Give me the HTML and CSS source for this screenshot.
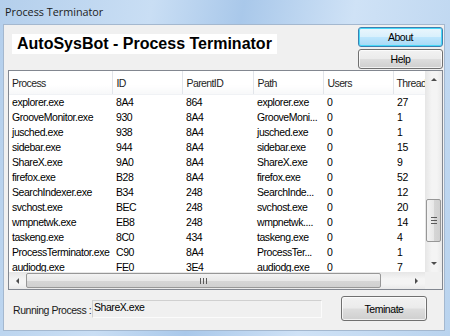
FILE: index.html
```html
<!DOCTYPE html>
<html lang="en">
<head>
    <meta charset="UTF-8">
    <title>Process Terminator</title>
    <link rel="stylesheet" href="styles.css">
</head>
<body>
    <div class="window">
        <div class="titlebar">Process Terminator</div>
        <div class="client">
            <div class="top">
                <div class="banner">AutoSysBot - Process Terminator</div>
                <div class="side-buttons">
                    <button class="btn btn-default">About</button>
                    <button class="btn">Help</button>
                </div>
            </div>

            <div class="listview">
                <div class="list-area">
                    <table class="procs">
                        <colgroup>
                            <col style="width:103px"><col style="width:70px"><col style="width:71px">
                            <col style="width:70px"><col style="width:70px"><col style="width:70px">
                        </colgroup>
                        <thead>
                            <tr><th>Process</th><th>ID</th><th>ParentID</th><th>Path</th><th>Users</th><th>Threads</th></tr>
                        </thead>
                        <tbody>
                            <tr><td>explorer.exe</td><td>8A4</td><td>864</td><td>explorer.exe</td><td>0</td><td>27</td></tr>
                            <tr><td>GrooveMonitor.exe</td><td>930</td><td>8A4</td><td>GrooveMoni...</td><td>0</td><td>1</td></tr>
                            <tr><td>jusched.exe</td><td>938</td><td>8A4</td><td>jusched.exe</td><td>0</td><td>1</td></tr>
                            <tr><td>sidebar.exe</td><td>944</td><td>8A4</td><td>sidebar.exe</td><td>0</td><td>15</td></tr>
                            <tr><td>ShareX.exe</td><td>9A0</td><td>8A4</td><td>ShareX.exe</td><td>0</td><td>9</td></tr>
                            <tr><td>firefox.exe</td><td>B28</td><td>8A4</td><td>firefox.exe</td><td>0</td><td>52</td></tr>
                            <tr><td>SearchIndexer.exe</td><td>B34</td><td>248</td><td>SearchInde...</td><td>0</td><td>12</td></tr>
                            <tr><td>svchost.exe</td><td>BEC</td><td>248</td><td>svchost.exe</td><td>0</td><td>20</td></tr>
                            <tr><td>wmpnetwk.exe</td><td>EB8</td><td>248</td><td>wmpnetwk....</td><td>0</td><td>14</td></tr>
                            <tr><td>taskeng.exe</td><td>8C0</td><td>434</td><td>taskeng.exe</td><td>0</td><td>4</td></tr>
                            <tr><td>ProcessTerminator.exe</td><td>C90</td><td>8A4</td><td>ProcessTer...</td><td>0</td><td>1</td></tr>
                            <tr><td>audiodg.exe</td><td>FE0</td><td>3E4</td><td>audiodg.exe</td><td>0</td><td>7</td></tr>
                        </tbody>
                    </table>
                </div>
                <div class="vscroll">
                    <span class="arrow arrow-up"></span>
                    <div class="vtrack"><span class="vthumb"><i></i><i></i><i></i></span></div>
                    <span class="arrow arrow-down"></span>
                </div>
                <div class="hscroll">
                    <span class="arrow arrow-left"></span>
                    <div class="htrack"><span class="hthumb"><i></i><i></i><i></i></span></div>
                    <span class="arrow arrow-right"></span>
                </div>
                <div class="corner"></div>
            </div>

            <div class="bottom">
                <span class="running-label">Running Process :</span>
                <div class="running-box">ShareX.exe</div>
                <button class="btn btn-terminate">Teminate</button>
            </div>
        </div>
    </div>
</body>
</html>
```

FILE: styles.css
```css
/*--window frame------------------------------------------------------------*/
html, body {
    margin: 0;
    padding: 0;
}
body {
    width: 450px;
    height: 336px;
    overflow: hidden;
    font-family: "Liberation Sans", Arial, sans-serif;
    font-size: 10.5px;
    letter-spacing: -0.45px;
}
.window {
    width: 450px;
    height: 336px;
    background: linear-gradient(100deg, #b4cfec 0%, #c9def4 30%, #a9c8ea 48%, #cfe2f6 70%, #b9d3ee 100%);
    display: flex;
    flex-direction: column;
}
.titlebar {
    height: 24px;
    line-height: 23px;
    padding-left: 5px;
    font-family: "Open Sans", "Noto Sans", sans-serif;
    font-size: 10.8px;
    letter-spacing: 0;
    color: #1b1b1b;
}
.client {
    margin: 0 5px 0 3px;
    height: 307px;
    background: #f0f0f0;
    border: 1px solid #a4b8cf;
    box-sizing: border-box;
    display: flex;
    flex-direction: column;
}

/*--top bar------------------------------------------------------------------*/
.top {
    height: 45px;
    display: flex;
    justify-content: space-between;
    padding: 2px 1px 0 4px;
    box-sizing: border-box;
}
.banner {
    margin: 7px 0 0 4px;
    width: 265px;
    height: 20px;
    line-height: 20px;
    padding-left: 5px;
    box-sizing: border-box;
    background: #fff;
    font-weight: bold;
    font-size: 16px;
    letter-spacing: 0;
    color: #000;
}
.side-buttons {
    display: flex;
    flex-direction: column;
    gap: 2px;
}

.btn {
    width: 85px;
    height: 20px;
    padding: 0;
    font-family: "Liberation Sans", Arial, sans-serif;
    font-size: 10.5px;
    letter-spacing: -0.45px;
    color: #000;
    border: 1px solid #707070;
    border-radius: 3px;
    background: linear-gradient(#f2f2f2 0%, #ebebeb 48%, #dddddd 52%, #cfcfcf 100%);
    box-shadow: inset 0 0 0 1px rgba(255,255,255,0.7);
}
.btn-default {
    border-color: #3c7fb1;
    background: linear-gradient(#eaf6fd 0%, #d9f0fc 48%, #bee6fd 52%, #a7d9f5 100%);
    box-shadow: inset 0 0 0 1px #48d9f8;
}

/*--list view---------------------------------------------------------------*/
.listview {
    margin-left: 4px;
    width: 435px;
    height: 220px;
    border: 1px solid #828790;
    box-sizing: border-box;
    background: #fff;
    display: grid;
    grid-template-columns: 1fr 17px;
    grid-template-rows: 1fr 17px;
}
.list-area {
    overflow: hidden;
}
table.procs {
    border-collapse: collapse;
    table-layout: fixed;
    width: 454px;
}
.procs th {
    height: 23px;
    padding: 0 0 0 4px;
    text-align: left;
    font-weight: normal;
    letter-spacing: -0.6px;
    color: #1e1e1e;
    background: linear-gradient(#ffffff 0%, #ffffff 60%, #f7f8f9 100%);
    border-right: 1px solid #e2e5ea;
    border-bottom: 1px solid #f0f2f5;
    white-space: nowrap;
    overflow: hidden;
}
.procs th:first-child,
.procs td:first-child {
    padding-left: 3px;
}
.procs th:last-child {
    padding-left: 3px;
}
.procs td {
    height: 15px;
    padding: 0 0 0 4px;
    line-height: 15px;
    color: #000;
    white-space: nowrap;
    overflow: hidden;
}

/*--scrollbars--------------------------------------------------------------*/
.vscroll {
    grid-row: 1;
    grid-column: 2;
    display: flex;
    flex-direction: column;
    background: linear-gradient(90deg, #e6e6e6, #f4f4f4 40%, #f4f4f4 70%, #e9e9e9);
}
.hscroll {
    grid-row: 2;
    grid-column: 1;
    display: flex;
    background: linear-gradient(#e6e6e6, #f4f4f4 40%, #f4f4f4 70%, #e9e9e9);
}
.corner {
    grid-row: 2;
    grid-column: 2;
    background: #f0f0f0;
}
.arrow {
    width: 17px;
    height: 17px;
    flex: none;
    display: flex;
    align-items: center;
    justify-content: center;
}
.arrow::before {
    content: "";
    border: 3px solid transparent;
}
.arrow-up::before    { border-bottom: 3px solid #4d4d4d; border-top: 0; }
.arrow-down::before  { border-top: 3px solid #4d4d4d; border-bottom: 0; }
.arrow-left::before  { border-right: 3px solid #4d4d4d; border-left: 0; }
.arrow-right::before { border-left: 3px solid #4d4d4d; border-right: 0; }

.vtrack {
    flex: 1;
    padding-top: 111px;
}
.vthumb {
    display: flex;
    flex-direction: column;
    align-items: center;
    justify-content: center;
    gap: 2px;
    width: 15px;
    height: 43px;
    margin-left: 1px;
    box-sizing: border-box;
    border: 1px solid #979797;
    border-radius: 2px;
    background: linear-gradient(90deg, #f3f3f3, #e8e8e8 50%, #d6d6d6 52%, #d0d0d0);
}
.vthumb i {
    display: block;
    width: 6px;
    height: 1px;
    background: #5a5a5a;
}
.htrack {
    flex: 1;
}
.hthumb {
    display: flex;
    align-items: center;
    justify-content: center;
    gap: 2px;
    width: 355px;
    height: 15px;
    margin-top: 1px;
    box-sizing: border-box;
    border: 1px solid #979797;
    border-radius: 2px;
    background: linear-gradient(#f3f3f3, #e8e8e8 50%, #d6d6d6 52%, #d0d0d0);
}
.hthumb i {
    display: block;
    width: 1px;
    height: 6px;
    background: #5a5a5a;
}

/*--bottom------------------------------------------------------------------*/
.bottom {
    flex: 1;
    display: flex;
    align-items: center;
    padding: 0 0 3px 9px;
}
.running-label {
    color: #1a1a1a;
    width: 79px;
    flex: none;
    white-space: nowrap;
    margin-top: 2px;
}
.running-box {
    width: 230px;
    height: 18px;
    box-sizing: border-box;
    border: 1px solid #d0d0d0;
    border-right-color: #fbfbfb;
    border-bottom-color: #fbfbfb;
    background: #f0f0f0;
    line-height: 12px;
    padding-left: 1px;
    color: #000;
}
.btn-terminate {
    margin-left: 19px;
    width: 86px;
    height: 25px;
}
```
